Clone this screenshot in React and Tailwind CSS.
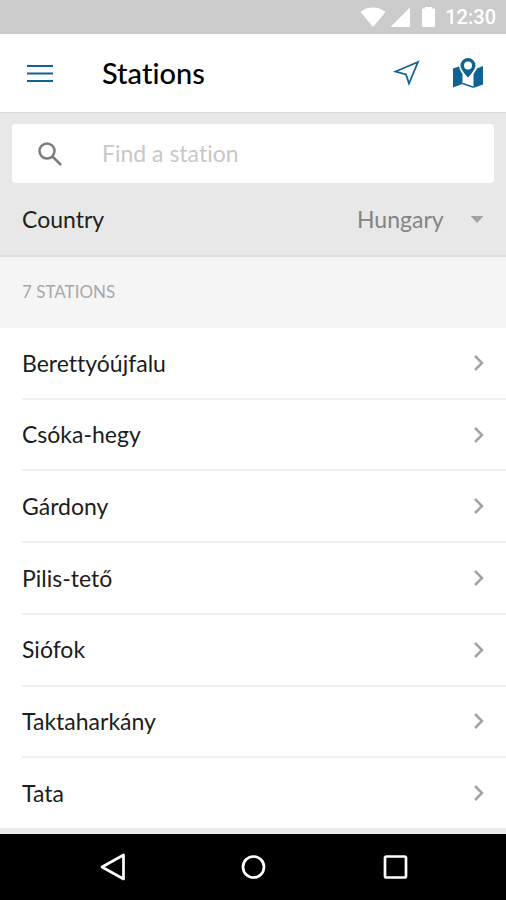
import React from 'react'

const stations = ['Berettyóújfalu', 'Csóka-hegy', 'Gárdony', 'Pilis-tető', 'Siófok', 'Taktaharkány', 'Tata']

function StatusBar() {
  return (
    <div className="flex h-[34px] items-center justify-end bg-[#cbcbcb] pr-[10px] text-white">
      <svg className="h-5 w-[26px]" viewBox="0 0 26 20" fill="currentColor" aria-hidden="true">
        <path d="M13 20 0.5 5C4 1.8 8.3 0.500 13 0.500s9 1.300 12.500 4.500z" />
      </svg>
      <svg className="ml-1 h-5 w-[20px]" viewBox="0 0 20 20" fill="currentColor" aria-hidden="true">
        <path d="M20 0.500V20H0.500z" />
      </svg>
      <svg className="ml-3 h-5 w-[13px]" viewBox="0 0 13 20" fill="currentColor" aria-hidden="true">
        <path d="M3 0h7v1.500h2a1 1 0 0 1 1 1v16.500a1 1 0 0 1-1 1H1a1 1 0 0 1-1-1V2.500a1 1 0 0 1 1-1h2z" />
      </svg>
      <span className="ml-[10px] font-[Roboto,sans-serif] text-xl font-medium">12:30</span>
    </div>
  )
}

function Header() {
  return (
    <header className="flex h-[79px] items-center border-b border-[#d9d9d9] bg-white px-[22px] text-[#0f6494]">
      <button type="button" aria-label="Menu" className="flex w-20 items-center pl-[5px]">
        <svg className="h-[18px] w-[26px]" viewBox="0 0 26 18" stroke="currentColor" strokeWidth="2" aria-hidden="true">
          <path d="M0 2h26M0 9.500h26M0 17h26" />
        </svg>
      </button>
      <h1 className="flex-1 text-[29px] leading-8 font-medium text-black">Stations</h1>
      <button type="button" aria-label="My location">
        <svg className="h-7 w-7" viewBox="0 0 28 28" fill="none" stroke="currentColor" strokeWidth="1.800" aria-hidden="true">
          <path d="M26 3 3.500 12.500 14 15.500 17 24.500z" />
        </svg>
      </button>
      <button type="button" aria-label="Map" className="ml-8">
        <svg className="h-8 w-8" viewBox="0 0 32 32" fill="currentColor" aria-hidden="true">
          <path d="M1 11.500l6-2c.8 3.500 2.200 5.500 3.500 7.500V27L1 30.500z" />
          <path d="M21.500 17c1.300-2 2.700-3.500 3.300-5.500L31 9v18.500l-9.500 3.500z" />
          <path d="M10.500 26.500l11 3.700" fill="none" stroke="currentColor" strokeWidth="1.500" />
          <path fillRule="evenodd" d="M16 1a7.500 7.500 0 0 1 7.500 7.500C23.500 13 16 20.500 16 20.500S8.500 13 8.500 8.500A7.500 7.500 0 0 1 16 1zm0 3.500a4 4 0 1 0 0 8 4 4 0 0 0 0-8z" />
        </svg>
      </button>
    </header>
  )
}

function Filters() {
  return (
    <section className="border-b-2 border-[#dedede] bg-[#e8e8e8] pt-[11px]">
      <label className="mx-3 flex h-[59px] items-center rounded-sm bg-white pl-[26px]">
        <svg className="h-6 w-6 text-[#7c7c7c]" viewBox="0 0 24 24" fill="none" stroke="currentColor" strokeWidth="2.500" aria-hidden="true">
          <circle cx="9" cy="9" r="7.500" />
          <path d="M14.500 14.500l8.500 8.500" />
        </svg>
        <input
          type="text"
          aria-label="Find a station"
          placeholder="Find a station"
          className="ml-10 min-w-0 flex-1 text-[23px] outline-none placeholder:text-[#c8c8c8]"
        />
      </label>
      <div className="relative flex h-[72px] items-center justify-between pl-[22px]">
        <label htmlFor="country" className="text-[23px] text-[#222]">Country</label>
        <select id="country" className="appearance-none pr-[62px] text-[23px] text-[#848484] outline-none">
          <option>Hungary</option>
        </select>
        <svg className="pointer-events-none absolute right-[22px] h-[7px] w-[14px] text-[#a3a3a3]" viewBox="0 0 14 7" fill="currentColor" aria-hidden="true">
          <path d="M0.500 0h13L7 7z" />
        </svg>
      </div>
    </section>
  )
}

function StationList() {
  return (
    <ul className="flex flex-1 flex-col bg-white">
      {stations.map((name) => (
        <li key={name} className="ml-[22px] flex min-h-16 flex-1 border-b-2 border-[#f0f0f0] last:border-b-0">
          <a href="#" className="flex flex-1 items-center justify-between pr-[22px] text-[23px] text-[#1c1c1c]">
            {name}
            <svg className="h-4 w-[10px] text-[#a3a3a3]" viewBox="0 0 10 16" fill="none" stroke="currentColor" strokeWidth="2.500" aria-hidden="true">
              <path d="M1 1l7 7-7 7" />
            </svg>
          </a>
        </li>
      ))}
    </ul>
  )
}

function NavBar() {
  return (
    <nav className="flex h-[66px] items-center justify-between bg-black px-[97px] text-white">
      <button type="button" aria-label="Back">
        <svg className="h-7 w-7" viewBox="0 0 28 28" fill="none" stroke="currentColor" strokeWidth="2.700" strokeLinejoin="round" aria-hidden="true">
          <path d="M26.500 2v24L5 14z" />
        </svg>
      </button>
      <button type="button" aria-label="Home">
        <svg className="h-7 w-7" viewBox="0 0 28 28" fill="none" stroke="currentColor" strokeWidth="2.700" aria-hidden="true">
          <circle cx="14.500" cy="14" r="10.500" />
        </svg>
      </button>
      <button type="button" aria-label="Recent apps">
        <svg className="h-7 w-7" viewBox="0 0 28 28" fill="none" stroke="currentColor" strokeWidth="2.700" aria-hidden="true">
          <rect x="4" y="3.500" width="21" height="21" rx="1.500" />
        </svg>
      </button>
    </nav>
  )
}

export default function App() {
  return (
    <div className="flex min-h-screen flex-col bg-[#ececec] font-[Lato,sans-serif] [font-variant-ligatures:none]">
      <StatusBar />
      <Header />
      <main className="flex flex-1 flex-col">
        <Filters />
        <h2 className="flex h-[71px] items-center bg-[#f5f5f5] px-[22px] pb-0.5 text-[17px] text-[#a8a8a8]">7 STATIONS</h2>
        <StationList />
      </main>
      <div className="h-[6px] bg-[#ececec]" />
      <NavBar />
    </div>
  )
}
